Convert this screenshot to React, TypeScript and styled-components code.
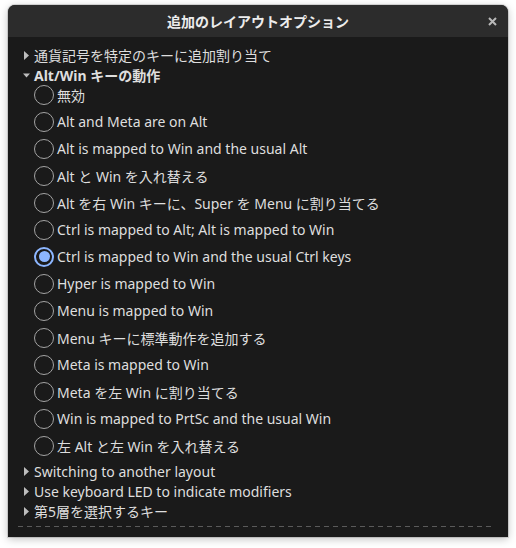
import styled, { createGlobalStyle } from 'styled-components';

const GlobalStyle = createGlobalStyle`
  html, body {
    margin: 0;
    padding: 0;
    background: #ffffff;
  }
  body {
    font-family: "Noto Sans", "Noto Sans CJK JP", sans-serif;
  }
`;

const Page = styled.div`
  width: 516px;
  height: 548px;
  padding: 5px 8px 0 8px;
  box-sizing: border-box;
`;

const Window = styled.div`
  width: 500px;
  height: 532px;
  border-radius: 7px 7px 0 0;
  background: #1a1a1a;
  box-shadow: 0 2px 8px rgba(0, 0, 0, 0.25), 0 0 0 1px rgba(0, 0, 0, 0.12);
  display: flex;
  flex-direction: column;
  overflow: hidden;
`;

const Header = styled.div`
  height: 32px;
  flex: none;
  background: #2c2c2c;
  display: grid;
  grid-template-columns: 32px 1fr 32px;
  align-items: center;
`;

const Title = styled.div`
  grid-column: 2;
  text-align: center;
  color: #ececec;
  font-weight: 700;
  font-size: 14px;
`;

const CloseButton = styled.div`
  grid-column: 3;
  display: flex;
  align-items: center;
  justify-content: center;
  color: #b8b8b8;
`;

const Scroller = styled.div`
  position: relative;
  height: 491px;
  flex: none;
  overflow: hidden;
  padding: 8px 0 0 15px;
  box-sizing: border-box;

  &::after {
    content: '';
    position: absolute;
    left: 10px;
    right: 16px;
    bottom: 1px;
    height: 1px;
    background: repeating-linear-gradient(90deg, #5a5a5a 0 5px, transparent 5px 9px);
  }
`;

const ExpanderRow = styled.div<{ $bold?: boolean }>`
  height: 20px;
  display: flex;
  align-items: center;
  gap: 4px;
  color: #dedede;
  font-size: 14px;
  font-weight: ${(p) => (p.$bold ? 700 : 400)};
  white-space: nowrap;
`;

const Arrow = styled.span`
  width: 7px;
  display: flex;
  justify-content: center;
  color: #bdbdbd;
`;

const RadioGroup = styled.div`
  display: flex;
  flex-direction: column;
  padding-left: 11px;
  margin: -4px 0 2px 0;
`;

const RadioRow = styled.label`
  height: 27px;
  display: flex;
  align-items: center;
  gap: 3px;
  color: #dedede;
  font-size: 14px;
  white-space: nowrap;
`;

const RadioCircle = styled.span<{ $checked?: boolean }>`
  width: 20px;
  height: 20px;
  box-sizing: border-box;
  border-radius: 50%;
  border: ${(p) => (p.$checked ? '2px solid #8cb6ff' : '1.5px solid #a3a3a3')};
  display: flex;
  align-items: center;
  justify-content: center;

  &::after {
    content: '';
    display: ${(p) => (p.$checked ? 'block' : 'none')};
    width: 11px;
    height: 11px;
    border-radius: 50%;
    background: #8cb6ff;
  }
`;

const TriangleRight = () => (
  <svg width="5" height="9" viewBox="0 0 5 9">
    <path d="M0 0 L5 4.5 L0 9 Z" fill="currentColor" />
  </svg>
);

const TriangleDown = () => (
  <svg width="9" height="5" viewBox="0 0 9 5">
    <path d="M0 0 L9 0 L4.5 5 Z" fill="currentColor" />
  </svg>
);

const options = [
  '無効',
  'Alt and Meta are on Alt',
  'Alt is mapped to Win and the usual Alt',
  'Alt と Win を入れ替える',
  'Alt を右 Win キーに、Super を Menu に割り当てる',
  'Ctrl is mapped to Alt; Alt is mapped to Win',
  'Ctrl is mapped to Win and the usual Ctrl keys',
  'Hyper is mapped to Win',
  'Menu is mapped to Win',
  'Menu キーに標準動作を追加する',
  'Meta is mapped to Win',
  'Meta を左 Win に割り当てる',
  'Win is mapped to PrtSc and the usual Win',
  '左 Alt と左 Win を入れ替える',
];

const selected = 6;

const after = [
  'Switching to another layout',
  'Use keyboard LED to indicate modifiers',
  '第5層を選択するキー',
];

const App = () => {
  return (
    <>
      <GlobalStyle />
      <Page>
        <Window>
          <Header>
            <Title>追加のレイアウトオプション</Title>
            <CloseButton>
              <svg width="9" height="9" viewBox="0 0 9 9">
                <path d="M1 1 L8 8 M8 1 L1 8" stroke="currentColor" strokeWidth="2" />
              </svg>
            </CloseButton>
          </Header>
          <Scroller>
            <ExpanderRow>
              <Arrow><TriangleRight /></Arrow>
              通貨記号を特定のキーに追加割り当て
            </ExpanderRow>
            <ExpanderRow $bold>
              <Arrow><TriangleDown /></Arrow>
              Alt/Win キーの動作
            </ExpanderRow>
            <RadioGroup>
              {options.map((o, i) => (
                <RadioRow key={o}>
                  <RadioCircle $checked={i === selected} />
                  {o}
                </RadioRow>
              ))}
            </RadioGroup>
            {after.map((t) => (
              <ExpanderRow key={t}>
                <Arrow><TriangleRight /></Arrow>
                {t}
              </ExpanderRow>
            ))}
          </Scroller>
        </Window>
      </Page>
    </>
  );
};

export default App;
